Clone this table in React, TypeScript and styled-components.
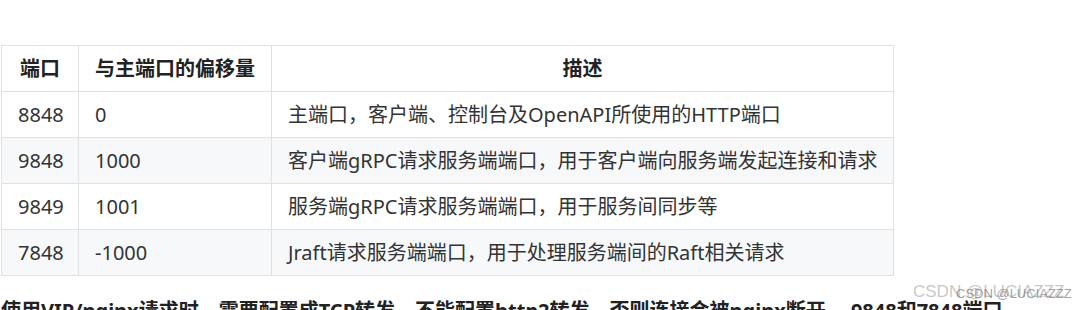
import React from "react";
import styled, { createGlobalStyle } from "styled-components";

const Global = createGlobalStyle`
  html, body { margin: 0; padding: 0; background: #ffffff; }
  body { font-family: "Noto Sans", "Noto Sans CJK SC", sans-serif; color: #333333; }
`;

const Page = styled.div`
  position: relative;
  width: 1079px;
  height: 310px;
  overflow: hidden;
  padding: 45px 0 0 1px;
  box-sizing: border-box;
`;

const Table = styled.table`
  border-collapse: collapse;
  width: 892px;
  table-layout: fixed;
  font-size: 20px;
  line-height: 29px;
`;

const Row = styled.tr<{ $alt?: boolean }>`
  background: ${(p) => (p.$alt ? "#f6f8fa" : "#ffffff")};
`;

const Head = styled.th`
  border: 1px solid #dfe2e5;
  padding: 8px 16px;
  font-weight: 700;
  color: #222222;
  text-align: center;
  white-space: nowrap;
`;

const Cell = styled.td`
  border: 1px solid #dfe2e5;
  padding: 8px 16px;
  color: #333333;
  text-align: left;
  white-space: nowrap;
`;

const Note = styled.p`
  margin: 20px 0 0 0;
  font-size: 20px;
  line-height: 30px;
  font-weight: 700;
  color: #222222;
  white-space: nowrap;
`;

const Mark = styled.span<{ $small?: boolean }>`
  position: absolute;
  font-family: "Liberation Sans", Arial, sans-serif;
  white-space: nowrap;
  pointer-events: none;
  left: ${(p) => (p.$small ? "956px" : "913px")};
  top: ${(p) => (p.$small ? "286px" : "282px")};
  font-size: ${(p) => (p.$small ? "13px" : "17px")};
  color: ${(p) => (p.$small ? "rgba(120,120,120,0.7)" : "rgba(175,175,175,0.7)")};
`;

const rows = [
  ["8848", "0", "主端口，客户端、控制台及OpenAPI所使用的HTTP端口"],
  ["9848", "1000", "客户端gRPC请求服务端端口，用于客户端向服务端发起连接和请求"],
  ["9849", "1001", "服务端gRPC请求服务端端口，用于服务间同步等"],
  ["7848", "-1000", "Jraft请求服务端端口，用于处理服务端间的Raft相关请求"],
];

export default function App() {
  return (
    <>
      <Global />
      <Page>
        <Table>
          <colgroup>
            <col style={{ width: 77 }} />
            <col style={{ width: 193 }} />
            <col style={{ width: 622 }} />
          </colgroup>
          <thead>
            <Row>
              <Head>端口</Head>
              <Head>与主端口的偏移量</Head>
              <Head>描述</Head>
            </Row>
          </thead>
          <tbody>
            {rows.map((r, i) => (
              <Row key={r[0]} $alt={i % 2 === 1}>
                <Cell>{r[0]}</Cell>
                <Cell>{r[1]}</Cell>
                <Cell>{r[2]}</Cell>
              </Row>
            ))}
          </tbody>
        </Table>
        <Note>使用VIP/nginx请求时，需要配置成TCP转发，不能配置http2转发，否则连接会被nginx断开。 9848和7848端口</Note>
        <Mark>CSDN @LUCIAZZZ</Mark>
        <Mark $small>CSDN @LUCIAZZZ</Mark>
      </Page>
    </>
  );
}
